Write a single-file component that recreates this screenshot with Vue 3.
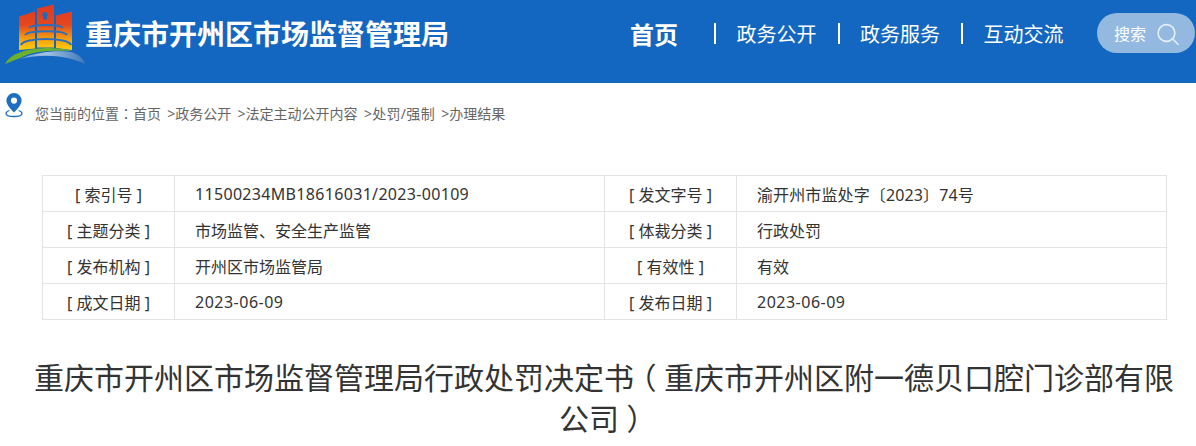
<script setup>
const crumbs = ['政务公开', '法定主动公开内容', '处罚/强制', '办理结果']
const navItems = ['政务公开', '政务服务', '互动交流']
const rows = [
  ['索引号', '11500234MB18616031/2023-00109', '发文字号', '渝开州市监处字〔2023〕74号'],
  ['主题分类', '市场监管、安全生产监管', '体裁分类', '行政处罚'],
  ['发布机构', '开州区市场监管局', '有效性', '有效'],
  ['成文日期', '2023-06-09', '发布日期', '2023-06-09'],
]
const valueClass = (s) => {
  if (/^[\x00-\x7f]+$/.test(s)) return s.length > 12 ? 'num' : 'date'
  return /\d/.test(s) ? 'mix' : ''
}
</script>

<template>
  <div class="page">
    <header class="header">
      <svg class="logo" width="85" height="66" viewBox="0 0 85 66">
        <defs>
          <linearGradient id="lg" gradientUnits="userSpaceOnUse" x1="0" y1="4" x2="0" y2="48">
            <stop offset="0" stop-color="#e03a22" />
            <stop offset="0.45" stop-color="#e4471d" />
            <stop offset="0.75" stop-color="#f39a12" />
            <stop offset="1" stop-color="#ffca08" />
          </linearGradient>
          <linearGradient id="wash" x1="0" y1="0" x2="1" y2="0">
            <stop offset="0" stop-color="#6c9dd6" />
            <stop offset="0.4" stop-color="#a3c2e4" />
            <stop offset="1" stop-color="#3f78b8" />
          </linearGradient>
        </defs>
        <path d="M19 15.500 35 10.500V47.500L19 49Z M37 7.500 54 3.500V46.500H37Z M56 14.500 72 10.500V49L56 47Z" fill="url(#lg)" />
        <circle cx="45" cy="13.500" r="2.600" fill="#1a6cc2" />
        <path d="M43 13.500h4v5h-4z" fill="#1a6cc2" />
        <path d="M29 27c3-4 31-4 34 0M25 34c4-5 39-5 42 0" fill="none" stroke="#2f6fb8" stroke-width="2" />
        <path d="M21 44c2-8 48-8 50 0" fill="none" stroke="#2f6fb8" stroke-width="2.200" />
        <path d="M5 63C10 53 24 48 46 47c10 0 20 1 26 3-20-1-40 0-52 7L5 63Z" fill="#6cb12d" />
        <path d="M20 58C35 51 58 49 71 51c7 2 12 6 14 12C68 55 45 52 20 58Z" fill="url(#wash)" />
      </svg>
      <h1 class="site">重庆市开州区市场监督管理局</h1>
      <nav class="nav">
        <a class="home">首页</a>
        <template v-for="n in navItems" :key="n">
          <i class="sep"></i>
          <a class="item">{{ n }}</a>
        </template>
      </nav>
      <div class="search">
        <span>搜索</span>
        <svg class="glass" width="24" height="24" viewBox="0 0 24 24" fill="none" stroke="#e6eef8" stroke-width="1.600">
          <circle cx="9.500" cy="10" r="8.400" />
          <path d="M15.700 16l5.800 5.800" />
        </svg>
      </div>
    </header>

    <div class="crumb">
      <svg class="pin" width="18" height="26" viewBox="0 0 18 26">
        <path fill-rule="evenodd" d="M9 1a7.600 7.600 0 0 0-7.600 7.600C1.400 13 6 17.500 9 20.500c3-3 7.600-7.500 7.600-11.900A7.600 7.600 0 0 0 9 1Zm0 4.500a3.100 3.100 0 1 1 0 6.200 3.100 3.100 0 0 1 0-6.200Z" fill="#1f6fc0" />
        <path d="M4.500 18.500C2 19.300 1 20.500 1 21.500c0 1.800 3.500 3 8 3s8-1.200 8-3c0-1-1-2.200-3.500-3" fill="none" stroke="#1f6fc0" stroke-width="1.300" />
      </svg>
      <div class="crumb-text">
        <span>您当前的位置<span class="tc">：</span>首页</span>
        <span v-for="c in crumbs" :key="c" class="c" :class="{ wide: c.includes('/') }">&gt;{{ c }}</span>
      </div>
    </div>

    <table class="meta">
      <tbody>
        <tr v-for="r in rows" :key="r[0]">
          <td class="k">[ {{ r[0] }} ]</td>
          <td class="v" :class="valueClass(r[1])">{{ r[1] }}</td>
          <td class="k">[ {{ r[2] }} ]</td>
          <td class="v" :class="valueClass(r[3])">{{ r[3] }}</td>
        </tr>
      </tbody>
    </table>

    <h2 class="title"><span>重庆市开州区市场监督管理局行政处罚决定书</span><span class="paren">（</span><span>重庆市开州区附一德贝口腔门诊部有限</span><span>公司</span><span class="paren">）</span></h2>
  </div>
</template>

<style>
html, body { margin: 0; background: #fff; }
</style>

<style scoped>
.page {
  width: 1196px;
  height: 446px;
  overflow: hidden;
  font-family: "Noto Sans", "Noto Sans CJK SC", sans-serif;
  color: #333;
  text-spacing-trim: space-all;
}
.tc { font-family: "Noto Sans CJK TC", sans-serif; }
.paren {
  display: inline-block;
  width: 1em;
  text-align: center;
  font-feature-settings: "halt";
}
.header {
  height: 83px;
  background: #1467c0;
  display: flex;
  align-items: flex-start;
  color: #fff;
}
.logo { flex: none; margin-top: 1px; }
.site {
  margin: 13px 0 0 0;
  font-size: 28px;
  line-height: 42px;
  font-weight: 700;
  white-space: nowrap;
}
.nav {
  display: flex;
  align-items: center;
  margin: 13px 0 0 181px;
  height: 40px;
}
.home { font-size: 24px; font-weight: 700; width: 84px; }
.item { font-size: 20px; width: 80px; margin-right: 21px; }
.sep { width: 2px; height: 21px; background: #fff; margin-right: 20.500px; }
.search {
  flex: none;
  width: 98px;
  height: 40px;
  margin: 13px 1px 0 auto;
  box-sizing: border-box;
  padding: 0 14px 0 17px;
  border-radius: 20px;
  background: #94b9e0;
  display: flex;
  align-items: center;
  justify-content: space-between;
  font-size: 16px;
}
.glass { margin-top: 3px; }
.crumb { display: flex; height: 92px; box-sizing: border-box; padding: 9px 0 0 5px; }
.pin { flex: none; }
.crumb-text { margin: 11px 0 0 12px; font-size: 14px; line-height: 20px; color: #666; white-space: nowrap; }
.c { margin-left: 6.300px; }
.wide { letter-spacing: 0.3px; }
.meta {
  border-collapse: collapse;
  table-layout: fixed;
  width: 1125px;
  margin-left: 42px;
  font-size: 16px;
  color: #333;
}
.meta td { border: 1px solid #e4e4e4; height: 36px; padding: 0; box-sizing: border-box; }
.meta .k { width: 132px; text-align: center; }
.meta .v { padding-left: 20px; }
.meta .num { letter-spacing: 0.32px; }
.meta .date { letter-spacing: 0.5px; }
.meta .mix { letter-spacing: 0.12px; }
.title {
  margin: 37px 18px 0 30px;
  font-size: 30px;
  line-height: 41px;
  font-weight: 400;
  text-align: center;
  color: #333;
}
</style>
